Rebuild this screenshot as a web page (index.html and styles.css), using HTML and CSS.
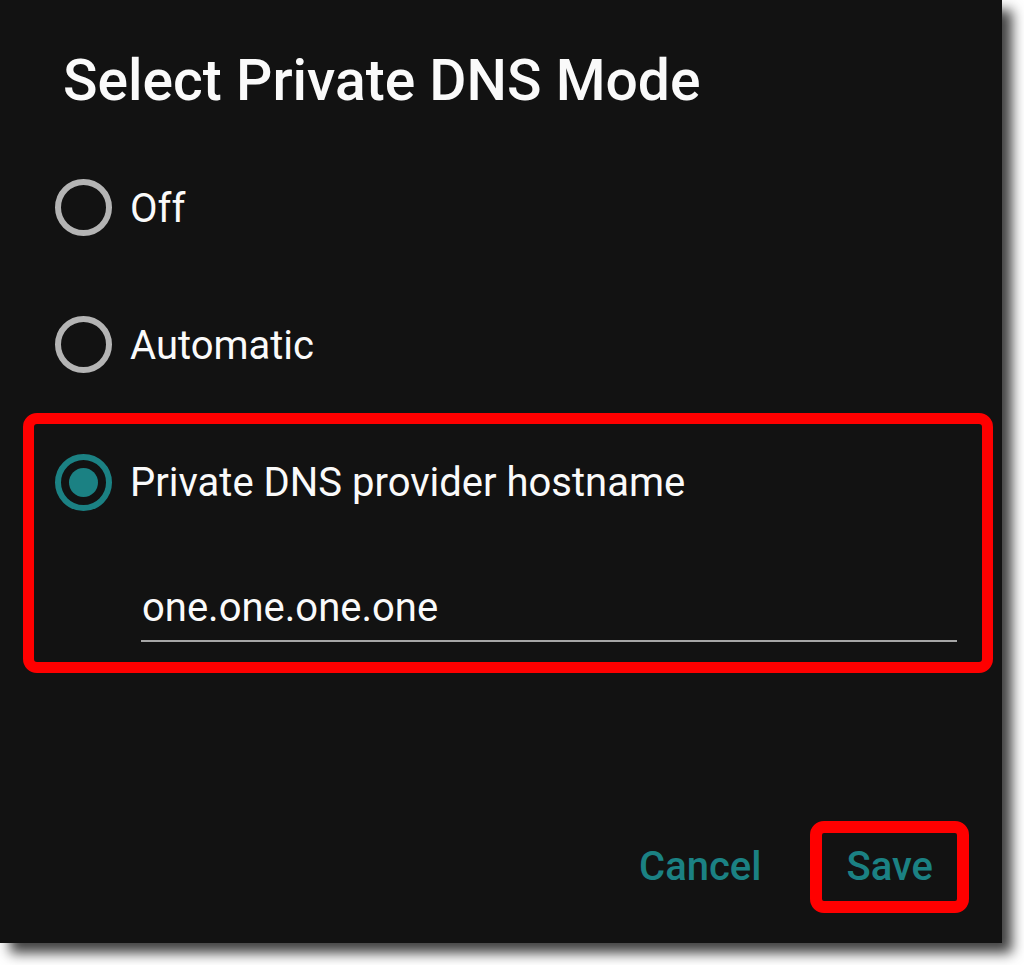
FILE: index.html
```html
<!DOCTYPE html>
<html lang="en">
<head>
<meta charset="utf-8">
<title>Select Private DNS Mode</title>
<link rel="stylesheet" href="styles.css">
</head>
<body>
<div class="dialog">
  <h1 class="title">Select Private DNS Mode</h1>
  <div class="options">
    <div class="option">
      <span class="radio"></span>
      <span class="label">Off</span>
    </div>
    <div class="option">
      <span class="radio"></span>
      <span class="label">Automatic</span>
    </div>
    <div class="highlight">
      <div class="option option-selected">
        <span class="radio radio-on"><span class="dot"></span></span>
        <span class="label">Private DNS provider hostname</span>
      </div>
      <div class="field">one.one.one.one</div>
    </div>
  </div>
  <div class="actions">
    <span class="btn">Cancel</span>
    <span class="btn btn-save">Save</span>
  </div>
</div>
</body>
</html>
```

FILE: styles.css
```css
html, body {
  margin: 0;
  padding: 0;
  background: #ffffff;
}

body {
  width: 1024px;
  height: 965px;
  overflow: hidden;
  font-family: Roboto, "Noto Sans", "Liberation Sans", sans-serif;
}

.dialog {
  width: 1002px;
  height: 943px;
  background: #121212;
  box-shadow: 10px 10px 12px rgba(0, 0, 0, 0.75);
  display: flex;
  flex-direction: column;
  box-sizing: border-box;
}

.title {
  margin: 0;
  padding: 47px 0 0 63px;
  font-size: 57px;
  line-height: 68px;
  font-weight: 500;
  color: #fafafa;
  letter-spacing: 0;
}

.options {
  margin-top: 24px;
  display: flex;
  flex-direction: column;
}

.option {
  height: 137px;
  display: flex;
  align-items: center;
  padding-left: 55px;
}

.radio {
  width: 57px;
  height: 57px;
  box-sizing: border-box;
  border: 6px solid #b4b4b4;
  border-radius: 50%;
  flex: none;
  display: flex;
  align-items: center;
  justify-content: center;
}

.radio-on {
  border-color: #1b8183;
}

.dot {
  width: 29px;
  height: 29px;
  border-radius: 50%;
  background: #1b8183;
}

.label {
  margin-left: 18px;
  padding-top: 2px;
  font-size: 40px;
  line-height: 48px;
  color: #fafafa;
}

.highlight {
  margin: 0 9px 0 23px;
  border: 11px solid #ff0000;
  border-radius: 14px;
  padding-bottom: 20px;
}

.option-selected {
  height: 116px;
  padding-left: 21px;
}

.field {
  margin: 42px 25px 0 107px;
  font-size: 40px;
  line-height: 52px;
  color: #fafafa;
  padding: 0 0 6px 1px;
  border-bottom: 2px solid #a6a6a6;
}

.actions {
  margin-top: auto;
  padding: 0 33px 30px 0;
  display: flex;
  justify-content: flex-end;
  align-items: center;
}

.btn {
  font-size: 40px;
  font-weight: 500;
  line-height: 50px;
  color: #1b8183;
}

.btn-save {
  margin-left: 49px;
  border: 12px solid #ff0000;
  border-radius: 14px;
  height: 68px;
  padding: 0 24px;
  display: flex;
  align-items: center;
}
```
